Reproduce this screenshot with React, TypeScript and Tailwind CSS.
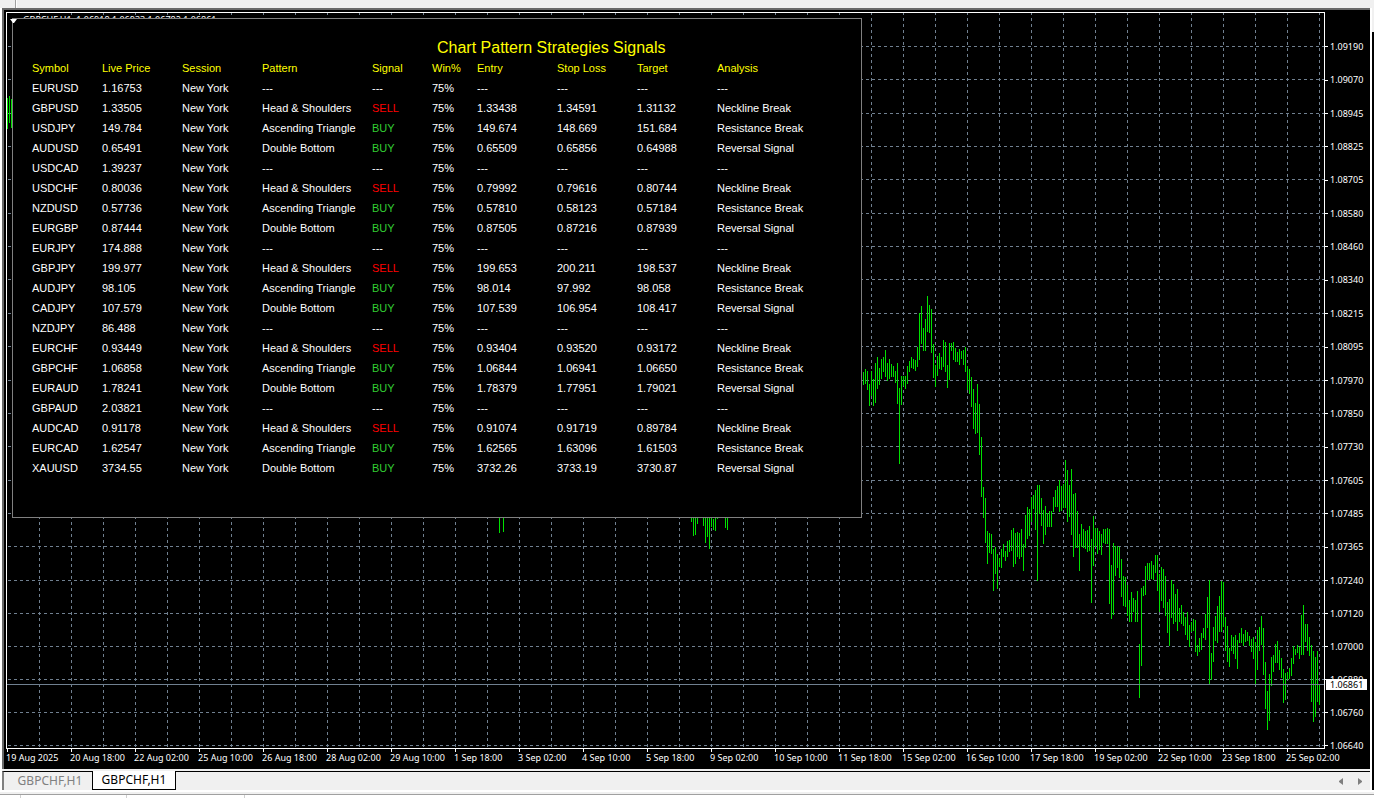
type Bar = [number, number];

// [x of first bar, highs and lows of the bars that follow, two pixels apart]
const runs: { x: number; bars: Bar[] }[] = [
  { x: 7, bars: [[98, 129], [96, 123], [99, 128]] },
  { x: 499, bars: [[517, 533]] },
  { x: 503, bars: [[517, 532]] },
  { x: 691, bars: [[517, 522], [517, 536], [517, 535], [517, 524]] },
  { x: 703, bars: [[517, 526], [517, 543], [517, 537], [517, 549], [517, 527], [519, 530], [517, 531], [517, 519]] },
  { x: 725, bars: [[517, 528], [517, 530]] },
  {
    x: 863,
    bars: [
      [372, 385], [369, 384], [371, 390], [384, 406], [371, 396], [379, 406], [363, 403], [357, 389], [368, 385], [359, 379],
      [357, 372], [350, 377], [363, 381], [359, 379], [364, 377], [366, 377], [371, 383], [363, 404], [388, 464], [376, 405],
      [376, 386], [376, 389], [366, 384], [361, 372], [357, 368], [359, 369], [360, 371], [347, 367], [313, 360], [306, 344],
      [328, 351], [319, 351], [296, 332], [305, 333], [309, 353], [344, 378], [365, 387], [356, 376], [353, 369], [357, 370],
      [340, 367], [342, 372], [365, 388], [343, 380], [343, 351], [342, 360], [348, 362], [352, 362], [349, 365], [351, 359],
      [350, 365], [347, 372], [366, 390], [369, 394], [377, 407], [389, 429], [403, 434], [384, 433], [404, 455], [437, 497],
      [487, 518], [498, 543], [531, 564], [533, 553], [534, 554], [549, 591], [547, 574], [554, 589], [558, 567], [549, 568],
      [544, 557], [551, 561], [541, 557], [540, 552], [530, 551], [528, 567], [533, 564], [532, 557], [533, 559], [529, 557],
      [544, 571], [515, 548], [507, 539], [509, 536], [497, 522], [495, 509], [490, 530], [485, 581], [485, 514], [498, 526],
      [510, 544], [506, 535], [513, 527], [511, 527], [511, 527], [497, 512], [490, 507], [486, 507], [480, 512], [486, 511],
      [484, 508], [460, 508], [470, 522], [485, 517], [469, 535], [494, 557], [493, 548], [511, 548], [534, 571], [524, 547],
      [529, 548], [531, 549], [530, 552], [526, 551], [539, 603], [516, 566], [528, 547], [528, 554], [531, 550], [534, 555],
      [529, 543], [529, 544], [528, 544], [529, 604], [565, 619], [543, 615], [546, 576], [546, 568], [547, 578], [559, 597],
      [576, 606], [577, 607], [585, 616], [600, 622], [592, 622], [598, 612], [600, 622], [591, 622], [644, 698], [588, 666],
      [586, 596], [566, 595], [563, 580], [563, 580], [561, 579], [565, 580], [555, 573], [555, 591], [574, 612], [567, 601],
      [569, 608], [576, 616], [602, 633], [599, 646], [580, 618], [584, 624], [594, 622], [589, 631], [608, 622], [605, 624],
      [612, 626], [617, 635], [612, 640], [625, 647], [622, 632], [619, 631], [620, 652], [645, 656], [638, 652], [633, 650],
      [628, 638], [614, 640], [597, 628], [580, 684], [653, 680], [627, 662], [616, 641], [606, 643], [596, 632], [581, 632],
      [582, 627], [617, 651], [626, 662], [648, 667], [635, 651], [637, 654], [635, 659], [640, 669], [633, 643], [628, 643],
      [634, 646], [630, 642], [632, 641], [636, 646], [639, 652], [637, 659], [642, 684], [630, 670], [627, 651], [616, 645],
      [628, 675], [662, 709], [691, 730], [674, 721], [657, 686], [655, 672], [644, 663], [641, 663], [650, 670], [658, 678],
      [669, 703], [673, 700], [672, 680], [668, 679], [658, 676], [646, 664], [649, 655], [645, 653], [647, 659], [615, 655],
      [605, 655], [624, 642], [624, 651], [637, 656], [645, 702], [651, 722], [657, 717], [651, 702], [684, 705],
    ],
  },
];

// Inner edge of the plot frame, in window pixels
const LEFT = 7;
const TOP = 13;

const levels = [46, 79, 113, 146, 179, 213, 246, 279, 313, 346, 380, 413, 446, 480, 513, 546, 580, 613, 646, 679, 712, 745];

const prices = [
  '1.09190', '1.09070', '1.08945', '1.08825', '1.08705', '1.08580', '1.08460', '1.08340', '1.08215', '1.08095', '1.07970',
  '1.07850', '1.07730', '1.07605', '1.07485', '1.07365', '1.07240', '1.07120', '1.07000', '1.06880', '1.06760', '1.06640',
];

const times = [
  '19 Aug 2025', '20 Aug 18:00', '22 Aug 02:00', '25 Aug 10:00', '26 Aug 18:00', '28 Aug 02:00', '29 Aug 10:00',
  '1 Sep 18:00', '3 Sep 02:00', '4 Sep 10:00', '5 Sep 18:00', '9 Sep 02:00', '10 Sep 10:00', '11 Sep 18:00',
  '15 Sep 02:00', '16 Sep 10:00', '17 Sep 18:00', '19 Sep 02:00', '22 Sep 10:00', '23 Sep 18:00', '25 Sep 02:00',
];

const columns = [
  { label: 'Symbol', width: 'w-[70px]' },
  { label: 'Live Price', width: 'w-20' },
  { label: 'Session', width: 'w-20' },
  { label: 'Pattern', width: 'w-[110px]' },
  { label: 'Signal', width: 'w-[60px]' },
  { label: 'Win%', width: 'w-[45px]' },
  { label: 'Entry', width: 'w-20' },
  { label: 'Stop Loss', width: 'w-20' },
  { label: 'Target', width: 'w-20' },
  { label: 'Analysis', width: 'w-[120px]' },
];

const NONE = '---';

// The pattern decides both the side of the trade and the analysis text
const patterns = {
  none: { name: NONE, signal: NONE, analysis: NONE, color: 'text-white' },
  head: { name: 'Head & Shoulders', signal: 'SELL', analysis: 'Neckline Break', color: 'text-[#ff0000]' },
  triangle: { name: 'Ascending Triangle', signal: 'BUY', analysis: 'Resistance Break', color: 'text-[#32cd32]' },
  bottom: { name: 'Double Bottom', signal: 'BUY', analysis: 'Reversal Signal', color: 'text-[#32cd32]' },
};

type Signal = {
  symbol: string;
  price: string;
  pattern: keyof typeof patterns;
  entry?: string;
  stop?: string;
  target?: string;
};

const signals: Signal[] = [
  { symbol: 'EURUSD', price: '1.16753', pattern: 'none' },
  { symbol: 'GBPUSD', price: '1.33505', pattern: 'head', entry: '1.33438', stop: '1.34591', target: '1.31132' },
  { symbol: 'USDJPY', price: '149.784', pattern: 'triangle', entry: '149.674', stop: '148.669', target: '151.684' },
  { symbol: 'AUDUSD', price: '0.65491', pattern: 'bottom', entry: '0.65509', stop: '0.65856', target: '0.64988' },
  { symbol: 'USDCAD', price: '1.39237', pattern: 'none' },
  { symbol: 'USDCHF', price: '0.80036', pattern: 'head', entry: '0.79992', stop: '0.79616', target: '0.80744' },
  { symbol: 'NZDUSD', price: '0.57736', pattern: 'triangle', entry: '0.57810', stop: '0.58123', target: '0.57184' },
  { symbol: 'EURGBP', price: '0.87444', pattern: 'bottom', entry: '0.87505', stop: '0.87216', target: '0.87939' },
  { symbol: 'EURJPY', price: '174.888', pattern: 'none' },
  { symbol: 'GBPJPY', price: '199.977', pattern: 'head', entry: '199.653', stop: '200.211', target: '198.537' },
  { symbol: 'AUDJPY', price: '98.105', pattern: 'triangle', entry: '98.014', stop: '97.992', target: '98.058' },
  { symbol: 'CADJPY', price: '107.579', pattern: 'bottom', entry: '107.539', stop: '106.954', target: '108.417' },
  { symbol: 'NZDJPY', price: '86.488', pattern: 'none' },
  { symbol: 'EURCHF', price: '0.93449', pattern: 'head', entry: '0.93404', stop: '0.93520', target: '0.93172' },
  { symbol: 'GBPCHF', price: '1.06858', pattern: 'triangle', entry: '1.06844', stop: '1.06941', target: '1.06650' },
  { symbol: 'EURAUD', price: '1.78241', pattern: 'bottom', entry: '1.78379', stop: '1.77951', target: '1.79021' },
  { symbol: 'GBPAUD', price: '2.03821', pattern: 'none' },
  { symbol: 'AUDCAD', price: '0.91178', pattern: 'head', entry: '0.91074', stop: '0.91719', target: '0.89784' },
  { symbol: 'EURCAD', price: '1.62547', pattern: 'triangle', entry: '1.62565', stop: '1.63096', target: '1.61503' },
  { symbol: 'XAUUSD', price: '3734.55', pattern: 'bottom', entry: '3732.26', stop: '3733.19', target: '3730.87' },
];

function PriceChart() {
  const gridX = Array.from({ length: 41 }, (_, i) => 39 - LEFT + i * 32);

  return (
    <svg className="absolute inset-0 h-full w-full" shapeRendering="crispEdges" aria-hidden="true">
      <g stroke="#708090" strokeDasharray="3 3">
        {gridX.map(x => (
          <line key={x} x1={x + 0.5} x2={x + 0.5} y1={-1} y2="100%" />
        ))}
        {levels.map(y => (
          <line key={y} x1={1} x2="100%" y1={y - TOP + 0.5} y2={y - TOP + 0.5} />
        ))}
      </g>
      {runs.map(run =>
        run.bars.map(([high, low], i) => (
          <rect
            key={`${run.x}-${i}`}
            x={run.x + i * 2 - LEFT}
            y={high - TOP}
            width={1}
            height={low - high}
            fill="#00e000"
          />
        ))
      )}
      {/* Bid line */}
      <rect x={0} y={684 - TOP} width="100%" height={1} fill="#708090" />
    </svg>
  );
}

function SignalsPanel() {
  return (
    <section className="absolute left-[5px] top-[5px] h-[500px] w-[850px] border border-[#808080] bg-black pl-[19px] pt-[19px] font-['Liberation_Sans',Arial,sans-serif] text-[11px] text-white">
      <h1 className="pl-[405px] text-[16px] leading-5 text-[#ffff00]">Chart Pattern Strategies Signals</h1>
      <table className="table-fixed border-collapse text-left">
        <thead>
          <tr className="h-5 text-[#ffff00]">
            {columns.map(col => (
              <th key={col.label} className={`p-0 font-normal leading-5 ${col.width}`}>{col.label}</th>
            ))}
          </tr>
        </thead>
        <tbody>
          {signals.map(row => {
            const pattern = patterns[row.pattern];
            return (
              <tr key={row.symbol} className="h-5 whitespace-nowrap leading-5">
                <td className="p-0">{row.symbol}</td>
                <td className="p-0">{row.price}</td>
                <td className="p-0">New York</td>
                <td className="p-0">{pattern.name}</td>
                <td className={`p-0 ${pattern.color}`}>{pattern.signal}</td>
                <td className="p-0">75%</td>
                <td className="p-0">{row.entry ?? NONE}</td>
                <td className="p-0">{row.stop ?? NONE}</td>
                <td className="p-0">{row.target ?? NONE}</td>
                <td className="p-0">{pattern.analysis}</td>
              </tr>
            );
          })}
        </tbody>
      </table>
    </section>
  );
}

function PriceAxis() {
  return (
    <div className="relative w-[45px] shrink-0">
      <div className="flex flex-col pt-[18px]">
        {prices.map((price, i) => (
          <div
            key={price}
            className="flex shrink-0 items-center"
            style={{ height: i < levels.length - 1 ? levels[i + 1] - levels[i] : 33 }}
          >
            <span className="mr-0.5 h-px w-[3px] bg-white" />
            {price}
          </div>
        ))}
      </div>
      <div className="absolute left-[1px] top-[667px] flex h-[11px] w-[41px] items-center bg-white pl-1 text-black">1.06861</div>
    </div>
  );
}

function TimeAxis() {
  return (
    <div className="flex h-5 overflow-hidden whitespace-nowrap">
      {times.map(time => (
        <div key={time} className="w-16 shrink-0 leading-3">
          <span className="ml-px block h-[3px] w-px bg-white" />
          {time}
        </div>
      ))}
    </div>
  );
}

function ChartTabs() {
  return (
    <nav className="flex h-[19px] items-stretch border-l-2 border-t border-l-[#808080] border-t-black bg-[#f0f0f0] font-['Noto_Sans',sans-serif] text-[12px]">
      <button className="w-[88px] pl-1 text-[#808080]">GBPCHF,H1</button>
      <button className="-mt-px h-[19px] w-[84px] border border-t-0 border-black bg-white text-black">GBPCHF,H1</button>
      <div className="ml-auto flex items-center gap-[15px] pr-2">
        <button aria-label="Scroll tabs left">
          <svg width="4" height="7" viewBox="0 0 4 7" fill="#808080"><path d="M4 0v7L0 4V3z" /></svg>
        </button>
        <button aria-label="Scroll tabs right">
          <svg width="4" height="7" viewBox="0 0 4 7" fill="#808080"><path d="M0 0v7l4-3V3z" /></svg>
        </button>
      </div>
    </nav>
  );
}

export default function App() {
  return (
    <div className="flex h-screen flex-col overflow-hidden bg-[#f0f0f0]">
      <div className="h-2 shrink-0 pl-[15px]">
        <div className="h-full w-[2px] border-l border-[#a0a0a0] bg-white" />
      </div>

      <div className="flex min-h-0 flex-1">
        <div className="flex min-w-0 flex-1 flex-col border-l-2 border-white">
          <main className="flex min-h-0 flex-1 flex-col border-l-2 border-t-2 border-[#696969] bg-black pl-[2px] pt-[2px] font-['Noto_Sans',sans-serif] text-[9px] text-white">
            <div className="flex min-h-0 flex-1">
              <div className="relative min-w-0 flex-1 border border-white">
                <div className="absolute left-4 top-[1px] whitespace-nowrap leading-3">
                  GBPCHF,H1&nbsp; 1.06918 1.06933 1.06782 1.06861
                </div>
                <PriceChart />
                <SignalsPanel />
                <svg className="absolute left-[3px] top-[6px]" width="7" height="4" viewBox="0 0 7 4" fill="#fff">
                  <path d="M0 0h7L4 4H3z" />
                </svg>
              </div>
              <PriceAxis />
            </div>
            <TimeAxis />
          </main>
          <div className="h-[2px] shrink-0 bg-[#f0f0f0]" />
          <ChartTabs />
        </div>
        <div className="w-[2px] shrink-0 bg-white" />
        <div className="mt-6 w-[2px] shrink-0 bg-black" />
      </div>

      <div className="h-2 shrink-0 border-t-2 border-white pt-[2px]">
        <div className="h-px bg-[#a0a0a0]" />
        <div className="flex h-[3px] bg-white">
          <div className="w-[21px] border-r border-[#d0d0d0]" />
          <div className="w-[106px] border-r border-[#d0d0d0]" />
          <div className="w-[118px] border-r border-[#d0d0d0]" />
        </div>
      </div>
    </div>
  );
}
